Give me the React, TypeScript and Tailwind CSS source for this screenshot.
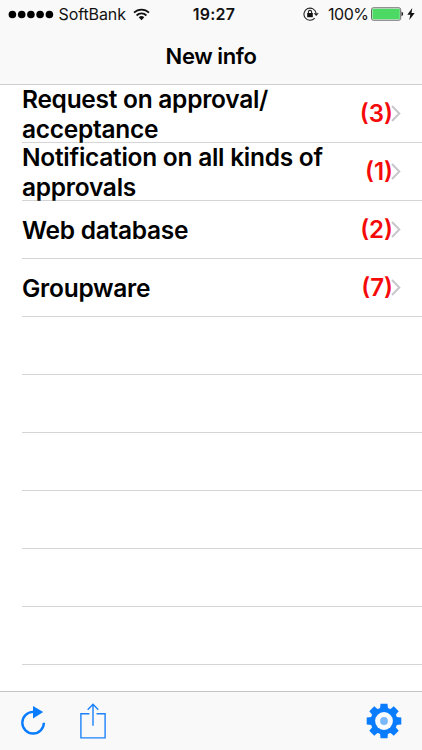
import React from 'react';

interface InfoItem {
  label: string[];
  count: number;
}

const ITEMS: InfoItem[] = [
  { label: ['Request on approval/', 'acceptance'], count: 3 },
  { label: ['Notification on all kinds of', 'approvals'], count: 1 },
  { label: ['Web database'], count: 2 },
  { label: ['Groupware'], count: 7 },
];

const EMPTY_ROWS = 6;

const WifiIcon = () => (
  <svg width="17" height="13" viewBox="0 0 17 13" fill="none" stroke="#111" strokeWidth="1.8">
    <path d="M1 4.7a10.6 10.6 0 0 1 15 0" />
    <path d="M3.6 7.5a6.9 6.9 0 0 1 9.8 0" />
    <path d="M5.7 9.3a4 4 0 0 1 5.6 0L8.5 12.2z" fill="#111" stroke="none" />
  </svg>
);

const RotationLockIcon = () => (
  <svg width="17" height="14" viewBox="0 0 17 14" fill="none" stroke="#222" strokeWidth="1.1">
    <path d="M11.7 11.2A6.1 6.1 0 1 1 13.1 6.2" />
    <path d="M10.6 6.2h5.2l-2.6 2.9z" fill="#222" stroke="none" />
    <rect x="4.2" y="6" width="5.6" height="4.2" fill="#111" stroke="none" />
    <path d="M5.4 6.5V5a1.6 1.6 0 0 1 3.2 0v1.5" />
  </svg>
);

const BatteryIcon = () => (
  <svg width="33" height="14" viewBox="0 0 33 14">
    <rect x="0.5" y="0.8" width="29.2" height="12.4" rx="1.8" fill="#fff" stroke="#666" />
    <rect x="1.4" y="1.7" width="27.4" height="10.6" rx="0.6" fill="#4cd964" />
    <path d="M30.5 4.8c2.2.4 2.2 4 0 4.4z" fill="#222" />
  </svg>
);

const BoltIcon = () => (
  <svg width="8" height="12" viewBox="0 0 8 12" fill="#111">
    <path d="M5.3 0L.3 6.7h3L2.3 12 7.7 4.9H4.5z" />
  </svg>
);

const RefreshIcon = () => (
  <svg width="26" height="30" viewBox="0 0 26 30" fill="none">
    <path d="M22.9 16.7A10.8 10.8 0 1 1 12.1 5.9" stroke="#0a7cff" strokeWidth="2.4" />
    <path d="M12 0v12.4L22.2 6z" fill="#0a7cff" />
  </svg>
);

const ShareIcon = () => (
  <svg width="26" height="36" viewBox="0 0 26 36" fill="none" stroke="#1b82fb" strokeWidth="1.4">
    <path d="M9.4 10.7H.9v24.2h24.2V10.7h-8.6" />
    <path d="M13 22.8V1.2M7.7 6.7L13 1.2l5.3 5.5" />
  </svg>
);

const GearIcon = () => (
  <svg width="36" height="36" viewBox="-18 -18 36 36">
    <g fill="#0a7cff">
      {[0, 45, 90, 135].map((angle) => (
        <path key={angle} d="M-4-12L-3.5-17.3H3.5L4-12V12L3.5 17.3H-3.5L-4 12z" transform={`rotate(${angle})`} />
      ))}
      <circle r="13.4" />
    </g>
    <circle r="8.9" fill="#f9fbff" />
    <circle r="3.9" fill="#7bb7fb" />
  </svg>
);

const StatusBar = () => (
  <div className="h-7 flex items-center relative text-[#111] text-[16px] leading-7">
    <svg className="ml-[8px]" width="46" height="9" viewBox="0 0 46 9" fill="#000">
      {[4.4, 13.7, 22.9, 32.1, 41.4].map((cx) => (
        <circle key={cx} cx={cx} cy="4.5" r="3.8" />
      ))}
    </svg>
    <span className="ml-[4.5px] w-[67px] whitespace-nowrap tracking-[-0.1px]">SoftBank</span>
    <span className="ml-[7.5px]"><WifiIcon /></span>
    <span className="absolute left-0 right-0 pl-[6px] text-center font-semibold tracking-[0.2px]">19:27</span>
    <div className="ml-auto flex items-center pr-[7px]">
      <RotationLockIcon />
      <span className="ml-[8px] w-[40px] mr-[3px] whitespace-nowrap tracking-[-0.45px]">100%</span>
      <BatteryIcon />
      <span className="ml-[3px]"><BoltIcon /></span>
    </div>
  </div>
);

const InfoRow = ({ item }: { item: InfoItem }) => (
  <li className="ml-[22px] h-[58px] flex items-center justify-between border-b border-[#d5d5d8] pr-[21px]">
    <div className="pt-[2px] text-[24.5px] leading-[29.5px] font-semibold whitespace-nowrap tracking-[-0.27px]">
      {item.label.map((line) => (
        <div key={line}>{line}</div>
      ))}
    </div>
    <div className="flex items-center">
      <span className="relative z-10 text-[24px] leading-7 font-semibold text-[#f50a0a]">({item.count})</span>
      <svg className="-ml-[2px]" width="10" height="17" viewBox="0 0 10 17" fill="none" stroke="#c7c7cc" strokeWidth="2">
        <path d="M1 1l7.3 7.5L1 16" />
      </svg>
    </div>
  </li>
);

export default function App() {
  return (
    <div className="w-[422px] h-[750px] flex flex-col overflow-hidden bg-white text-black font-['Inter',sans-serif]">
      <header className="h-[85px] shrink-0 bg-[#f9f9f9] border-b border-[#cfcfcf]">
        <StatusBar />
        <h1 className="text-center text-[22px] leading-[56px] font-semibold tracking-[-0.4px]">New info</h1>
      </header>

      <ul className="flex-1 min-h-0">
        {ITEMS.map((item) => (
          <InfoRow key={item.label[0]} item={item} />
        ))}
        {Array.from({ length: EMPTY_ROWS }, (_, i) => (
          <li key={i} className="ml-[22px] h-[58px] border-b border-[#d5d5d8]" />
        ))}
      </ul>

      <footer className="h-[59px] shrink-0 flex items-center bg-[#f9f9f9] border-t border-[#c4c4c4] pl-[21px] pr-[20.5px]">
        <button aria-label="Refresh"><RefreshIcon /></button>
        <button aria-label="Share" className="ml-[33px]"><ShareIcon /></button>
        <button aria-label="Settings" className="ml-auto"><GearIcon /></button>
      </footer>
    </div>
  );
}
